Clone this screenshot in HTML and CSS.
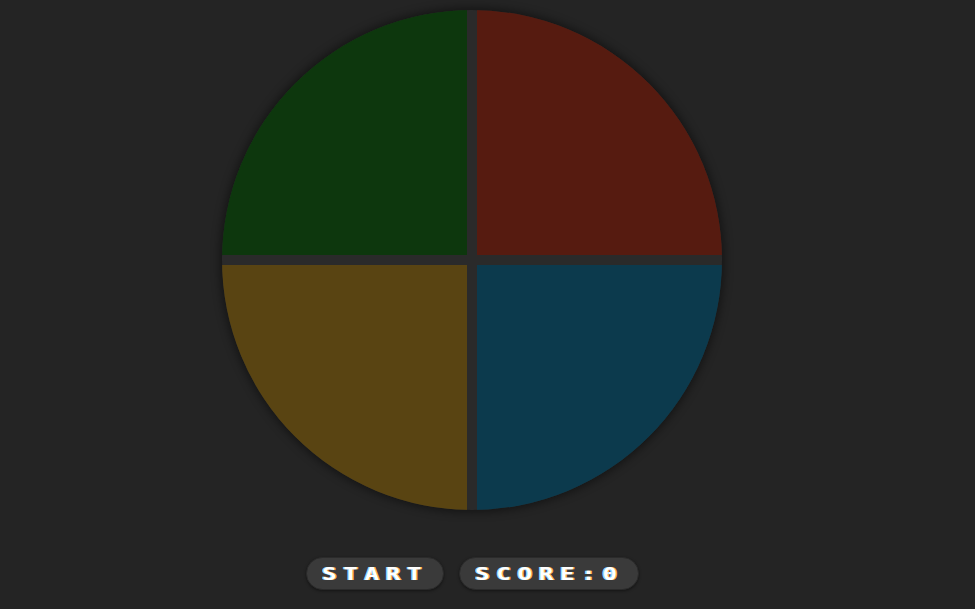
FILE: index.html
```html
<!DOCTYPE html>
<html>
<head>
<meta charset="utf-8">
<link rel="stylesheet" href="styles.css">
</head>
<body>
<div class="app">
  <div class="board">
    <div class="pad green"></div>
    <div class="pad red"></div>
    <div class="pad yellow"></div>
    <div class="pad blue"></div>
  </div>
  <div class="controls">
    <button class="btn start"><span class="label">START</span></button>
    <div class="btn score"><span class="label">SCORE:0</span></div>
  </div>
</div>
</body>
</html>
```
FILE: styles.css
```css
html, body {
  margin: 0;
  padding: 0;
  background: #242424;
  height: 100%;
}
.app {
  box-sizing: border-box;
  width: 944px;
  display: flex;
  flex-direction: column;
  align-items: center;
  padding-top: 10px;
}
.board {
  width: 500px;
  height: 500px;
  border-radius: 50%;
  overflow: hidden;
  background: #2a2a2a;
  display: grid;
  grid-template-columns: 1fr 1fr;
  grid-template-rows: 1fr 1fr;
  gap: 10px;
  box-shadow: 0 0 10px 2px rgba(0, 0, 0, 0.45);
}
.pad.green { background: #0d370d; }
.pad.red { background: #561b10; }
.pad.yellow { background: #594412; }
.pad.blue { background: #0c3a4d; }
.controls {
  margin-top: 47px;
  display: flex;
  gap: 15px;
}
.btn {
  box-sizing: border-box;
  height: 33px;
  border-radius: 17px;
  background: #3a3a3a;
  border: 1px solid #2b2b2b;
  box-shadow: 0 1px 3px rgba(0, 0, 0, 0.45);
  color: #ffffff;
  font-family: "DejaVu Sans Mono", monospace;
  font-weight: bold;
  font-size: 18px;
  display: flex;
  align-items: center;
  padding: 0 0 0 15px;
  margin: 0;
  overflow: hidden;
}
.label {
  display: inline-block;
  letter-spacing: 4.9px;
  transform: scaleX(1.35);
  transform-origin: left center;
  white-space: nowrap;
  text-shadow: -1px 0 #8fd4ff, 1px 0 #ffb04a;
}
.start { width: 138px; }
.score { width: 180px; }
```
